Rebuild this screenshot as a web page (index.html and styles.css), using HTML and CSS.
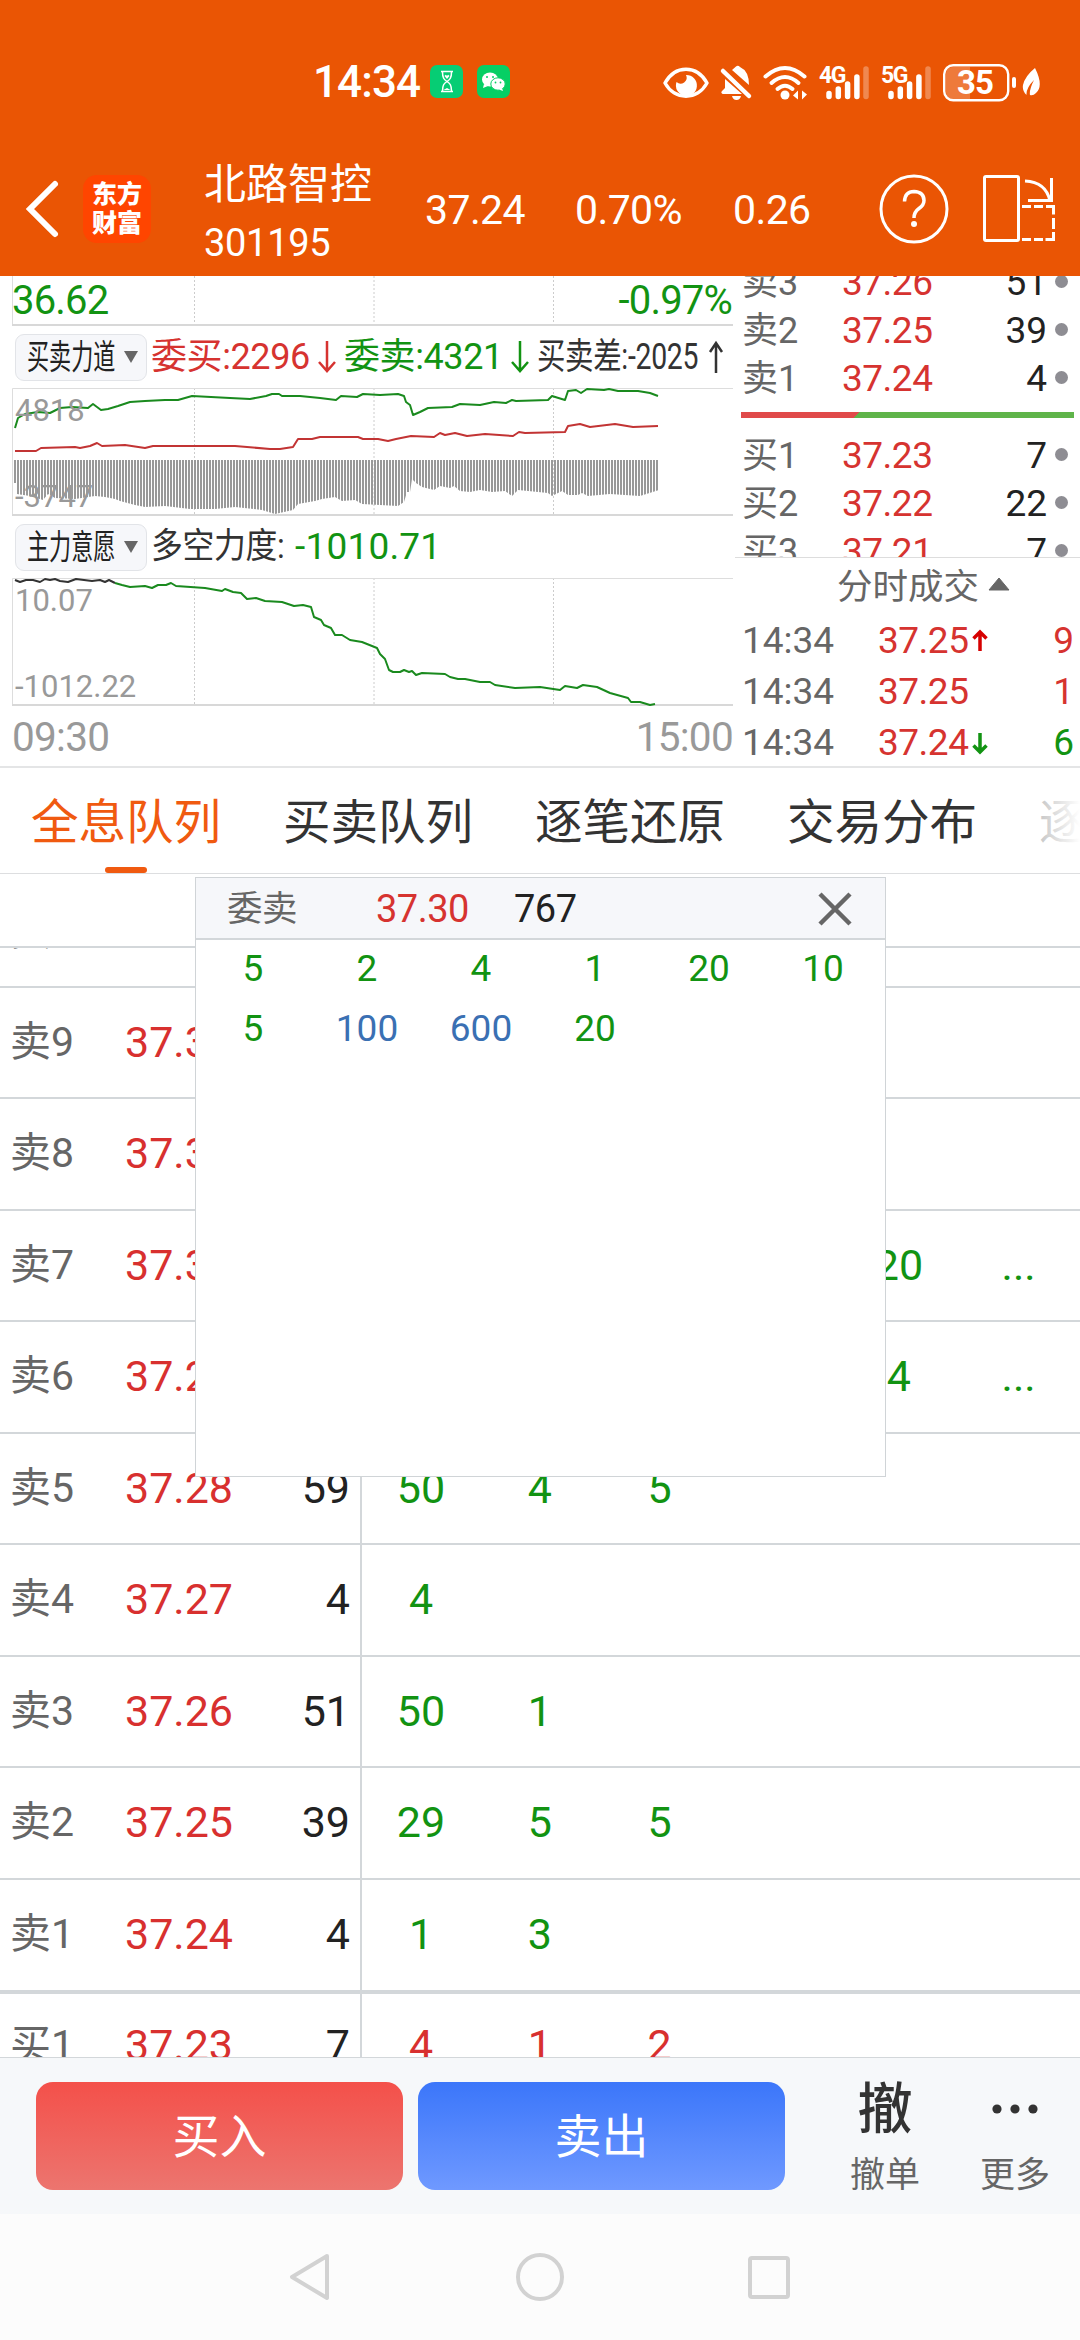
FILE: index.html
```html
<!DOCTYPE html>
<html lang="zh-CN">
<head>
  <meta charset="UTF-8" />
  <meta name="viewport" content="width=device-width, initial-scale=1.0"/>
  <title>北路智控 301195</title>
  <link rel="stylesheet" href="styles.css">
</head>
<body>
  <div class="screen">

    <header class="header">
      <div class="status">
        <span class="clock">14:34</span>
        <svg class="app-icons" width="82" height="34" viewBox="429 64 82 34">
          <rect x="430" y="64" width="33" height="33" rx="7" fill="#06cd74"/>
          <path d="M441 70.500h12M441 90.500h12M442.500 71c0 6 1.500 7.500 4.500 9.500c3-2 4.500-3.500 4.500-9.500M442.500 90c0-6 1.500-7.500 4.500-9.500c3 2 4.500 3.500 4.500 9.500" fill="none" stroke="#fff" stroke-width="1.500"/>
          <path d="M447 78l-2.500-3 1.200-1.200 1.300 1 1.300-1 1.200 1.200zM443.500 89l3.500-2 3.500 2z" fill="#fff"/>
          <rect x="477" y="64" width="33" height="33" rx="7" fill="#06cf64"/>
          <ellipse cx="490" cy="78.500" rx="8" ry="7" fill="#fff"/>
          <path d="M484 83l-1 4 5-2z" fill="#fff"/>
          <ellipse cx="498" cy="83" rx="7.200" ry="6.200" fill="#fff" stroke="#06cf64"/>
          <path d="M502 87l1 3-4-1.500z" fill="#fff"/>
          <circle cx="487" cy="76" r="1" fill="#06cf64"/><circle cx="493" cy="76" r="1" fill="#06cf64"/>
          <circle cx="495.500" cy="81.500" r=".9" fill="#06cf64"/><circle cx="500.500" cy="81.500" r=".9" fill="#06cf64"/>
        </svg>
        <svg class="sys-icons" width="380" height="40" viewBox="662 60 380 40">
          <!-- eye -->
          <path d="M665 81C675 62.500 697 62.500 707 81C697 98.500 675 98.500 665 81Z" fill="none" stroke="#fff" stroke-width="3.500" stroke-linejoin="round"/>
          <path d="M686 73A10.500 10.500 0 1 1 676.500 80A6 6 0 0 0 686 73Z" fill="#fff"/>
          <!-- bell off -->
          <path d="M725 77L742 92H724C721 92 721 90 722 89L725 86Z" fill="#fff"/>
          <path d="M732 68L736 64.500Q738 63 740 65Q749 69 749 83Z" fill="#fff"/>
          <path d="M732 94h9q-1 4-4.500 4t-4.500-4z" fill="#fff"/>
          <path d="M723 69L749 94" stroke="#fff" stroke-width="4.500" stroke-linecap="round"/>
          <!-- wifi -->
          <g fill="none" stroke="#fff" stroke-width="4" stroke-linecap="round">
            <path d="M765.500 74.500Q785 57.500 804.500 74.500"/>
            <path d="M771.500 81Q785 69 798.500 81"/>
            <path d="M777.500 87Q785 80.500 792.500 87"/>
          </g>
          <circle cx="785" cy="93" r="4.500" fill="#fff"/>
          <path d="M793 93.500l5-5v9zM807 92.500l-5-4v9z" fill="#fff"/>
          <!-- cellular -->
          <text class="net" x="819" y="80.500">4G</text>
          <text class="net" x="881" y="80.500">5G</text>
          <g stroke="#fff" stroke-width="5.500" stroke-linecap="round">
            <path d="M829 91.500V94.500M838.300 87V94.500M847.600 82V94.500M856.900 75V94.500"/>
            <path d="M866 67V94.500" opacity=".3"/>
            <path d="M891 91.500V94.500M900.300 87V94.500M909.600 82V94.500M918.900 75V94.500"/>
            <path d="M928 67V94.500" opacity=".3"/>
          </g>
          <!-- battery -->
          <path d="M953 65H970V97H953Q946 97 946 90V72Q946 65 953 65Z" fill="#fff" opacity=".22"/>
          <rect x="944.200" y="63.200" width="64" height="35" rx="9" fill="none" stroke="#fff" stroke-width="2.400"/>
          <rect x="1012" y="75" width="4" height="11" rx="2" fill="#fff"/>
          <text class="battery" x="975" y="92" text-anchor="middle">35</text>
          <path d="M1035 66Q1044 84 1036 91Q1033 94 1030 93Q1029 88 1034 78Q1026 86 1026.500 93Q1022 89 1023 83Q1025 74 1035 66Z" fill="#fff"/>
        </svg>
      </div>

      <div class="titlebar">
        <svg class="back" width="36" height="60" viewBox="0 0 36 60"><path d="M30 5L5 30L30 55" fill="none" stroke="#fff" stroke-width="6" stroke-linecap="round"/></svg>
        <div class="brand"><span>东方</span><span>财富</span></div>
        <div class="stock">
          <div class="stock-name">北路智控</div>
          <div class="stock-code">301195</div>
        </div>
        <span class="head-price">37.24</span>
        <span class="head-pct">0.70%</span>
        <span class="head-diff">0.26</span>
        <div class="help">
          <svg width="70" height="70" viewBox="0 0 70 70" fill="none" stroke="#fff" stroke-width="3">
            <circle cx="35" cy="35" r="33"/>
            <path d="M25.500 27.500Q26 17.500 35 17.500Q45 18 45 26.500Q45 31 40 34.500Q35 38 35 44" stroke-width="3.500"/>
            <circle cx="35" cy="50" r="3" fill="#fff" stroke="none"/>
          </svg>
        </div>
        <svg class="rotate" width="76" height="70" viewBox="981 174 76 70" fill="none" stroke="#fff" stroke-width="3">
          <rect x="983.500" y="176.500" width="34" height="64" rx="1.500"/>
          <path d="M1024 181Q1045 182 1049 201M1050.500 178V200.500H1027"/>
          <path d="M1021 206.500h9M1033 206.500h9M1045 206.500h7.500v8M1052.500 218v11M1052.500 232v7.500h-8M1042 239.500h-9M1030 239.500h-9"/>
        </svg>
      </div>
    </header>

    <section class="top">
      <div class="charts">
        <svg class="plot" width="721" height="50" viewBox="12 276 721 50">
          <path class="grid" d="M194.500 276V324M374 276V324M553.500 276V324"/>
          <path class="frame" d="M12.500 276V325"/>
          <path class="frame base" d="M12 325H733"/>
          <text class="low" x="12" y="314">36.62</text>
          <text class="low" x="732" y="314" text-anchor="end">-0.97%</text>
        </svg>

        <div class="legend">
          <div class="picker"><span class="squeeze">买卖力道</span><i class="tri"></i></div>
          <span class="item red">委买:2296<svg class="arrow" width="20" height="34" viewBox="0 0 20 34"><path d="M10 1V30M2 22L10 31L18 22"/></svg></span>
          <span class="item green">委卖:4321<svg class="arrow" width="20" height="34" viewBox="0 0 20 34"><path d="M10 1V30M2 22L10 31L18 22"/></svg></span>
          <span class="item diff"><span class="squeeze">买卖差:-2025</span><svg class="arrow" width="16" height="34" viewBox="0 0 16 34"><path d="M8 33V3M2 12L8 3L14 12"/></svg></span>
        </div>

        <svg class="plot" width="721" height="128" viewBox="12 388 721 128">
          <defs>
            <pattern id="bars" x="14" y="0" width="3" height="10" patternUnits="userSpaceOnUse"><rect width="2" height="10" fill="#999"/></pattern>
          </defs>
          <path class="grid" d="M194.500 388V515M374 388V515M553.500 388V515"/>
          <path class="frame" d="M733 388.500H12.500V515"/>
          <path class="frame base" d="M12 515H733"/>
          <path fill="url(#bars)" d="M14 460V483H17V494L30 496L43 500L48 494L55 498L75 499L95 496L105 497L115 499L120 501L135 505L145 507L165 506L190 509L215 509L235 507L262 510L275 514L293 510L298 504L315 501L322 499L335 497L342 501L355 500L362 504L398 506L404 502L407 492L410 492L412 479L416 483L422 487L434 490L440 486L450 488L454 486L460 491L470 492L480 490L492 492L505 491L512 496L518 490L548 493L552 496L562 491L568 495L578 495L582 493L588 496L610 494L640 496L659 490V460Z"/>
          <polyline class="line-green" points="15,428 18,418 25,414 38,412 50,413 60,408 72,407 88,408 93,404 101,410 108,409 118,406 130,402 145,401 165,400 178,400 192,396 230,398 250,399 266,396 272,394 279,394 282,396 300,396 320,398 336,400 341,396 357,397 363,394 380,395 398,394 404,396 406,402 410,405 413,415 420,412 428,408 452,407 460,404 480,405 494,402 506,403 512,400 516,401 548,400 552,396 565,400 568,391 576,390 581,393 587,389 604,390 609,389 618,391 638,391 650,393 658,396"/>
          <polyline class="line-red" points="15,451 36,451 41,448 75,447 80,448 90,446 97,443 102,446 125,445 145,448 153,446 235,446 270,449 280,449 293,447 298,439 312,439 320,437 358,437 363,439 378,439 388,441 396,439 411,436 434,437 440,433 445,435 455,433 467,436 485,434 513,436 519,432 525,433 565,432 568,426 580,424 590,427 615,424 633,427 658,426"/>
          <text class="axis" x="15" y="421">4818</text>
          <text class="axis" x="15" y="507">-3747</text>
        </svg>

        <div class="legend">
          <div class="picker"><span class="squeeze">主力意愿</span><i class="tri"></i></div>
          <span class="item force"><span class="squeeze">多空力度:</span></span>
          <span class="item green force-value">-1010.71</span>
        </div>

        <svg class="plot" width="721" height="128" viewBox="12 578 721 128">
          <path class="grid" d="M194.500 578V705M374 578V705M553.500 578V705"/>
          <path class="frame" d="M733 578.500H12.500V705"/>
          <path class="frame base" d="M12 705H733"/>
          <polyline class="line-dark" points="15,580 20,582 26,580 33,580 40,582 45,579 50,580 55,579 60,581 68,582 76,579 92,581 100,580 105,582 109,580 115,583"/>
          <polyline class="line-green" points="115,583 122,585 130,587 145,586 152,588 158,585 166,585 171,583 176,586 205,588 222,591 225,589 233,592 241,593 247,599 256,598 265,601 282,602 294,606 303,605 311,607 314,617 321,620 324,625 331,628 335,635 342,635 350,640 362,642 377,648 380,654 385,659 389,670 393,672 400,672 404,670 409,672 412,671 416,675 422,673 445,674 450,677 458,679 465,679 480,682 490,682 495,685 515,688 540,687 560,690 565,686 577,688 583,685 597,687 610,693 628,698 631,702 640,702 650,705 655,704"/>
          <text class="axis" x="15" y="611">10.07</text>
          <text class="axis" x="15" y="697">-1012.22</text>
        </svg>

        <div class="times"><span>09:30</span><span>15:00</span></div>
      </div>

      <div class="side">
        <div class="book">
          <div class="level"><span>卖3</span><b>37.26</b><em>51</em><i></i></div>
          <div class="level"><span>卖2</span><b>37.25</b><em>39</em><i></i></div>
          <div class="level"><span>卖1</span><b>37.24</b><em>4</em><i></i></div>
          <div class="ratio"></div>
          <div class="level"><span>买1</span><b>37.23</b><em>7</em><i></i></div>
          <div class="level"><span>买2</span><b>37.22</b><em>22</em><i></i></div>
          <div class="level"><span>买3</span><b>37.21</b><em>7</em><i></i></div>
        </div>
        <div class="deals-title">分时成交<svg width="22" height="15" viewBox="0 0 22 15"><path d="M11 1L21 13H1Z" fill="#666" stroke="#666" stroke-linejoin="round"/></svg></div>
        <div class="deal"><span>14:34</span><b>37.25</b><svg width="18" height="24" viewBox="0 0 18 24"><path d="M9 22V3M2.500 9.500L9 3L15.500 9.500" stroke="#d60000"/></svg><em class="red">9</em></div>
        <div class="deal"><span>14:34</span><b>37.25</b><em class="red">1</em></div>
        <div class="deal"><span>14:34</span><b>37.24</b><svg width="18" height="24" viewBox="0 0 18 24"><path d="M9 2V21M2.500 14.500L9 21L15.500 14.500" stroke="#129312"/></svg><em class="green">6</em></div>
      </div>
    </section>

    <nav class="tabs">
      <span class="tab active">全息队列</span>
      <span class="tab">买卖队列</span>
      <span class="tab">逐笔还原</span>
      <span class="tab">交易分布</span>
      <span class="tab">逐笔成交</span>
    </nav>

    <main class="queue">
      <div class="sticky"></div>
      <div class="row row-cut"><span>卖10</span></div>
      <div class="row"><span>卖9</span><b>37.32</b><em></em></div>
      <div class="row"><span>卖8</span><b>37.31</b><em></em></div>
      <div class="row"><span>卖7</span><b>37.30</b><em>767</em><div class="orders"><u>5</u><u>2</u><u>4</u><u>1</u><u>20</u><u>...</u></div></div>
      <div class="row"><span>卖6</span><b>37.29</b><em></em><div class="orders"><u></u><u></u><u></u><u></u><u>4</u><u>...</u></div></div>
      <div class="row"><span>卖5</span><b>37.28</b><em>59</em><div class="orders"><u>50</u><u>4</u><u>5</u></div></div>
      <div class="row"><span>卖4</span><b>37.27</b><em>4</em><div class="orders"><u>4</u></div></div>
      <div class="row"><span>卖3</span><b>37.26</b><em>51</em><div class="orders"><u>50</u><u>1</u></div></div>
      <div class="row"><span>卖2</span><b>37.25</b><em>39</em><div class="orders"><u>29</u><u>5</u><u>5</u></div></div>
      <div class="row last-sell"><span>卖1</span><b>37.24</b><em>4</em><div class="orders"><u>1</u><u>3</u></div></div>
      <div class="row buy"><span>买1</span><b>37.23</b><em>7</em><div class="orders"><u>4</u><u>1</u><u>2</u></div></div>

      <div class="popup">
        <div class="popup-head">
          <span class="popup-side">委卖</span>
          <span class="popup-price">37.30</span>
          <span class="popup-vol">767</span>
          <svg class="close" width="36" height="36" viewBox="0 0 36 36"><path d="M3 3L33 33M33 3L3 33" stroke="#666" stroke-width="4.500"/></svg>
        </div>
        <div class="popup-grid">
          <span>5</span><span>2</span><span>4</span><span>1</span><span>20</span><span>10</span>
          <span>5</span><span class="big">100</span><span class="big">600</span><span>20</span>
        </div>
      </div>
    </main>

    <footer class="actions">
      <div class="btn buy-btn">买入</div>
      <div class="btn sell-btn">卖出</div>
      <div class="tool"><strong>撤</strong><span>撤单</span></div>
      <div class="tool more">
        <strong><svg width="48" height="12" viewBox="0 0 48 12" fill="#333"><circle cx="6" cy="6" r="4.600"/><circle cx="24" cy="6" r="4.600"/><circle cx="42" cy="6" r="4.600"/></svg></strong>
        <span>更多</span>
      </div>
    </footer>

    <div class="sysnav">
      <svg width="48" height="50" viewBox="0 0 48 50"><path d="M40 4L5 25L40 46Z"/></svg>
      <svg width="48" height="50" viewBox="0 0 48 50"><circle cx="24" cy="25" r="22"/></svg>
      <svg width="48" height="50" viewBox="0 0 48 50"><rect x="5" y="6" width="38" height="39" rx="2"/></svg>
    </div>
  </div>
</body>
</html>
```

FILE: styles.css
```css
* {
  margin: 0;
  padding: 0;
  box-sizing: border-box;
}

body {
  width: 1080px;
  height: 2340px;
  overflow: hidden;
  background: #fff;
  font-family: Roboto, "Noto Sans CJK SC", sans-serif;
  color: #333;
}

b, em, i, u, strong {
  font-weight: 400;
  font-style: normal;
  text-decoration: none;
}

svg {
  display: block;
  flex: none;
}

.screen {
  display: flex;
  flex-direction: column;
  width: 1080px;
  height: 2340px;
}

.red { color: #d63330; }
.green { color: #129312; }

/* header */
.header {
  height: 276px;
  background: #ea5504;
  color: #fff;
}

.status {
  display: flex;
  align-items: center;
  height: 142px;
  padding: 22px 0 0 313px;
}

.clock {
  width: 116px;
  font-size: 44px;
  font-weight: 500;
  line-height: 50px;
  letter-spacing: -0.9px;
}

.sys-icons {
  margin-left: 151px;
}

.net {
  font-size: 23px;
  font-weight: 700;
  letter-spacing: -1.5px;
  fill: #fff;
}

.battery {
  font-size: 33px;
  font-weight: 700;
  letter-spacing: -1px;
  fill: #fff;
}

.titlebar {
  display: flex;
  align-items: center;
  height: 134px;
  padding-left: 25px;
}

.brand {
  display: flex;
  flex-direction: column;
  justify-content: center;
  width: 68px;
  height: 68px;
  margin-left: 22px;
  border-radius: 14px;
  background: #ff4500;
  text-align: center;
  font-size: 25px;
  font-weight: 900;
  line-height: 29px;
}

.stock {
  width: 221px;
  margin-left: 53px;
  padding-top: 10px;
}

.stock-name {
  font-size: 42px;
  line-height: 58px;
}

.stock-code {
  font-size: 38px;
  line-height: 58px;
  letter-spacing: -0.3px;
}

.head-price, .head-pct, .head-diff {
  font-size: 41px;
  line-height: 50px;
  padding-top: 2px;
  letter-spacing: -0.6px;
}

.head-price { width: 150px; }
.head-pct { width: 158px; }
.head-diff { width: 146px; }

.rotate {
  margin-left: 33px;
}

/* charts and order book */
.top {
  display: flex;
  height: 492px;
  border-bottom: 2px solid #e4e5e6;
}

.charts {
  width: 733px;
}

.plot {
  margin-left: 12px;
}

.grid {
  fill: none;
  stroke: #ccc;
  stroke-dasharray: 2 2;
}

.frame {
  fill: none;
  stroke: #ddd;
}

.base {
  stroke: #d8d8d8;
  stroke-width: 2;
}

.low {
  font-size: 40px;
  letter-spacing: -0.8px;
  fill: #129312;
}

.axis {
  font-size: 31px;
  fill: #999;
}

.line-green, .line-red, .line-dark {
  fill: none;
  stroke: #1a8a1e;
  stroke-width: 2;
  stroke-linejoin: round;
}

.line-red { stroke: #c23434; }
.line-dark { stroke: #333; }

.legend {
  display: flex;
  align-items: center;
  height: 62px;
  padding-left: 15px;
}

.picker {
  display: flex;
  align-items: center;
  width: 132px;
  height: 47px;
  margin-right: 4px;
  padding-left: 11px;
  border: 1px solid #e2e4e8;
  border-radius: 9px;
  background: #f6f7fa;
  color: #222;
}

.squeeze {
  display: block;
  white-space: nowrap;
  transform-origin: left center;
}

.picker .squeeze {
  width: 97px;
  font-size: 34px;
  line-height: 44px;
  transform: scaleX(.65);
}

.tri {
  border: 7.5px solid transparent;
  border-top: 12px solid #666;
  border-bottom: 0;
}

.item {
  display: flex;
  align-items: center;
  width: 193px;
  font-size: 36px;
  line-height: 44px;
  letter-spacing: -0.4px;
  white-space: nowrap;
}

.arrow {
  margin-left: 7px;
  fill: none;
  stroke: currentColor;
  stroke-width: 2.5;
}

.diff .squeeze {
  width: 164px;
  transform: scaleX(.79);
}

.force {
  width: 144px;
}

.force .squeeze {
  font-size: 35px;
  transform: scaleX(.91);
}

.force-value {
  font-size: 37px;
  letter-spacing: 0.2px;
}

.times {
  display: flex;
  justify-content: space-between;
  padding: 0 0 0 12px;
  font-size: 40.5px;
  line-height: 62px;
  letter-spacing: -0.7px;
  color: #999;
}

.side {
  width: 347px;
}

.book {
  height: 282px;
  margin-left: 2px;
  overflow: hidden;
  border-bottom: 1px solid #ddd;
}

.book .level:first-child {
  margin-top: -17px;
}

.level {
  display: flex;
  align-items: center;
  height: 48px;
  padding-left: 7px;
  font-size: 37px;
  line-height: 48px;
}

.level span {
  width: 100px;
  font-size: 36px;
  color: #666;
}

.level b {
  width: 100px;
  color: #d63330;
  letter-spacing: -0.5px;
}

.level em {
  width: 105px;
  text-align: right;
  color: #222;
}

.level i {
  width: 13px;
  height: 13px;
  margin: -4px 0 0 8px;
  border-radius: 50%;
  background: #8e8d93;
}

.ratio {
  height: 6px;
  margin: 9px 6px 14px;
  background: linear-gradient(135deg, #e04a4a 0 84px, #5fb44a 84px);
}

.deals-title {
  display: flex;
  align-items: center;
  height: 57px;
  padding: 2px 0 0 104px;
  font-size: 35.5px;
  line-height: 57px;
  color: #666;
}

.deals-title svg {
  margin: -7px 0 0 9px;
}

.deal {
  display: flex;
  align-items: center;
  height: 51px;
  padding-left: 9px;
  font-size: 37px;
  line-height: 51px;
}

.deal span {
  width: 136px;
  color: #666;
}

.deal b {
  width: 93px;
  color: #d63330;
  letter-spacing: -0.5px;
}

.deal svg {
  fill: none;
  stroke-width: 3.5;
}

.deal em {
  flex: 1;
  padding-right: 6px;
  text-align: right;
}

/* tabs */
.tabs {
  position: relative;
  display: flex;
  gap: 62px;
  height: 106px;
  padding-left: 31px;
  overflow: hidden;
  border-bottom: 1px solid #dddee0;
}

.tabs::after {
  content: "";
  position: absolute;
  top: 0;
  right: 0;
  width: 60px;
  height: 100px;
  background: linear-gradient(90deg, rgba(255,255,255,.6), #fff);
}

.tab {
  flex: none;
  width: 190px;
  padding-top: 3px;
  font-size: 47.5px;
  line-height: 105px;
  white-space: nowrap;
}

.active {
  position: relative;
  color: #f05a10;
}

.active::after {
  content: "";
  position: absolute;
  left: 74px;
  bottom: 0;
  width: 42px;
  height: 6px;
  border-radius: 3px;
  background: #f05a10;
}

/* order queue */
.queue {
  position: relative;
  height: 1184px;
  overflow: hidden;
  border-bottom: 1px solid #d3d7da;
}

.sticky {
  height: 74px;
  border-bottom: 2px solid #d3d7da;
}

.row {
  display: flex;
  align-items: center;
  height: 111.5px;
  padding: 0 0 1px 10px;
  border-bottom: 2px solid #d3d7da;
  font-size: 43px;
  line-height: 60px;
}

.row-cut {
  height: 39.5px;
  overflow: hidden;
  align-items: flex-start;
}

.row.row-cut span {
  margin-top: -47px;
}

.row span {
  width: 115px;
  color: #666;
  font-size: 41px;
}

.row b {
  width: 114px;
  color: #d8302f;
}

.row em {
  width: 111px;
  text-align: right;
  color: #222;
}

.orders {
  display: flex;
  align-items: center;
  height: 113px;
  margin-left: 10px;
  border-left: 2px solid #d3d7da;
  color: #129312;
}

.orders u {
  width: 119.7px;
  text-align: center;
}

.orders u:first-child {
  width: 118px;
}

.last-sell {
  height: 114px;
  padding-bottom: 2px;
  border-bottom-width: 4px;
}

.buy {
  height: 105px;
}

.buy .orders {
  color: #d8302f;
}

.popup {
  position: absolute;
  left: 195px;
  top: 3px;
  width: 691px;
  height: 600px;
  border: 1px solid #d0d4d7;
  background: #fff;
}

.popup-head {
  display: flex;
  align-items: center;
  height: 62px;
  padding: 1px 0 0 31px;
  border-bottom: 2px solid #d3d7da;
  background: #f6f7fa;
  font-size: 38px;
  line-height: 60px;
  letter-spacing: -0.5px;
}

.popup-side {
  width: 149px;
  font-size: 35.5px;
  color: #666;
}

.popup-price {
  width: 138px;
  color: #d63330;
}

.popup-vol {
  width: 303px;
  color: #222;
}

.popup-grid {
  display: grid;
  grid-template-columns: repeat(6, 114px);
  grid-auto-rows: 60px;
  font-size: 37px;
  line-height: 57px;
  text-align: center;
  color: #129312;
}

.popup-grid .big {
  color: #3a70b3;
}

/* bottom bar */
.actions {
  display: flex;
  height: 156px;
  padding: 24px 0 0 36px;
  background: #f6f8fa;
}

.btn {
  width: 367px;
  height: 108px;
  margin-right: 15px;
  border-radius: 17px;
  text-align: center;
  font-size: 47px;
  line-height: 109px;
  color: #fff;
}

.buy-btn { background: linear-gradient(#f4504a, #ec756f); }
.sell-btn { background: linear-gradient(#3b76fa, #6f99ff); }

.tool {
  display: flex;
  flex-direction: column;
  align-items: center;
  width: 130px;
  margin-left: 20px;
  font-size: 35px;
  color: #666;
}

.tool strong {
  display: flex;
  align-items: center;
  height: 54px;
  font-size: 55px;
  font-weight: 500;
  line-height: 54px;
  color: #333;
}

.tool span {
  margin-top: 18px;
  line-height: 44px;
}

.more {
  margin-left: 0;
}

.sysnav {
  display: flex;
  justify-content: center;
  gap: 181px;
  flex: 1;
  padding-top: 38px;
  background: #fcfcfc;
}

.sysnav svg {
  fill: none;
  stroke: #d2d2d2;
  stroke-width: 4;
  stroke-linejoin: round;
}
```
